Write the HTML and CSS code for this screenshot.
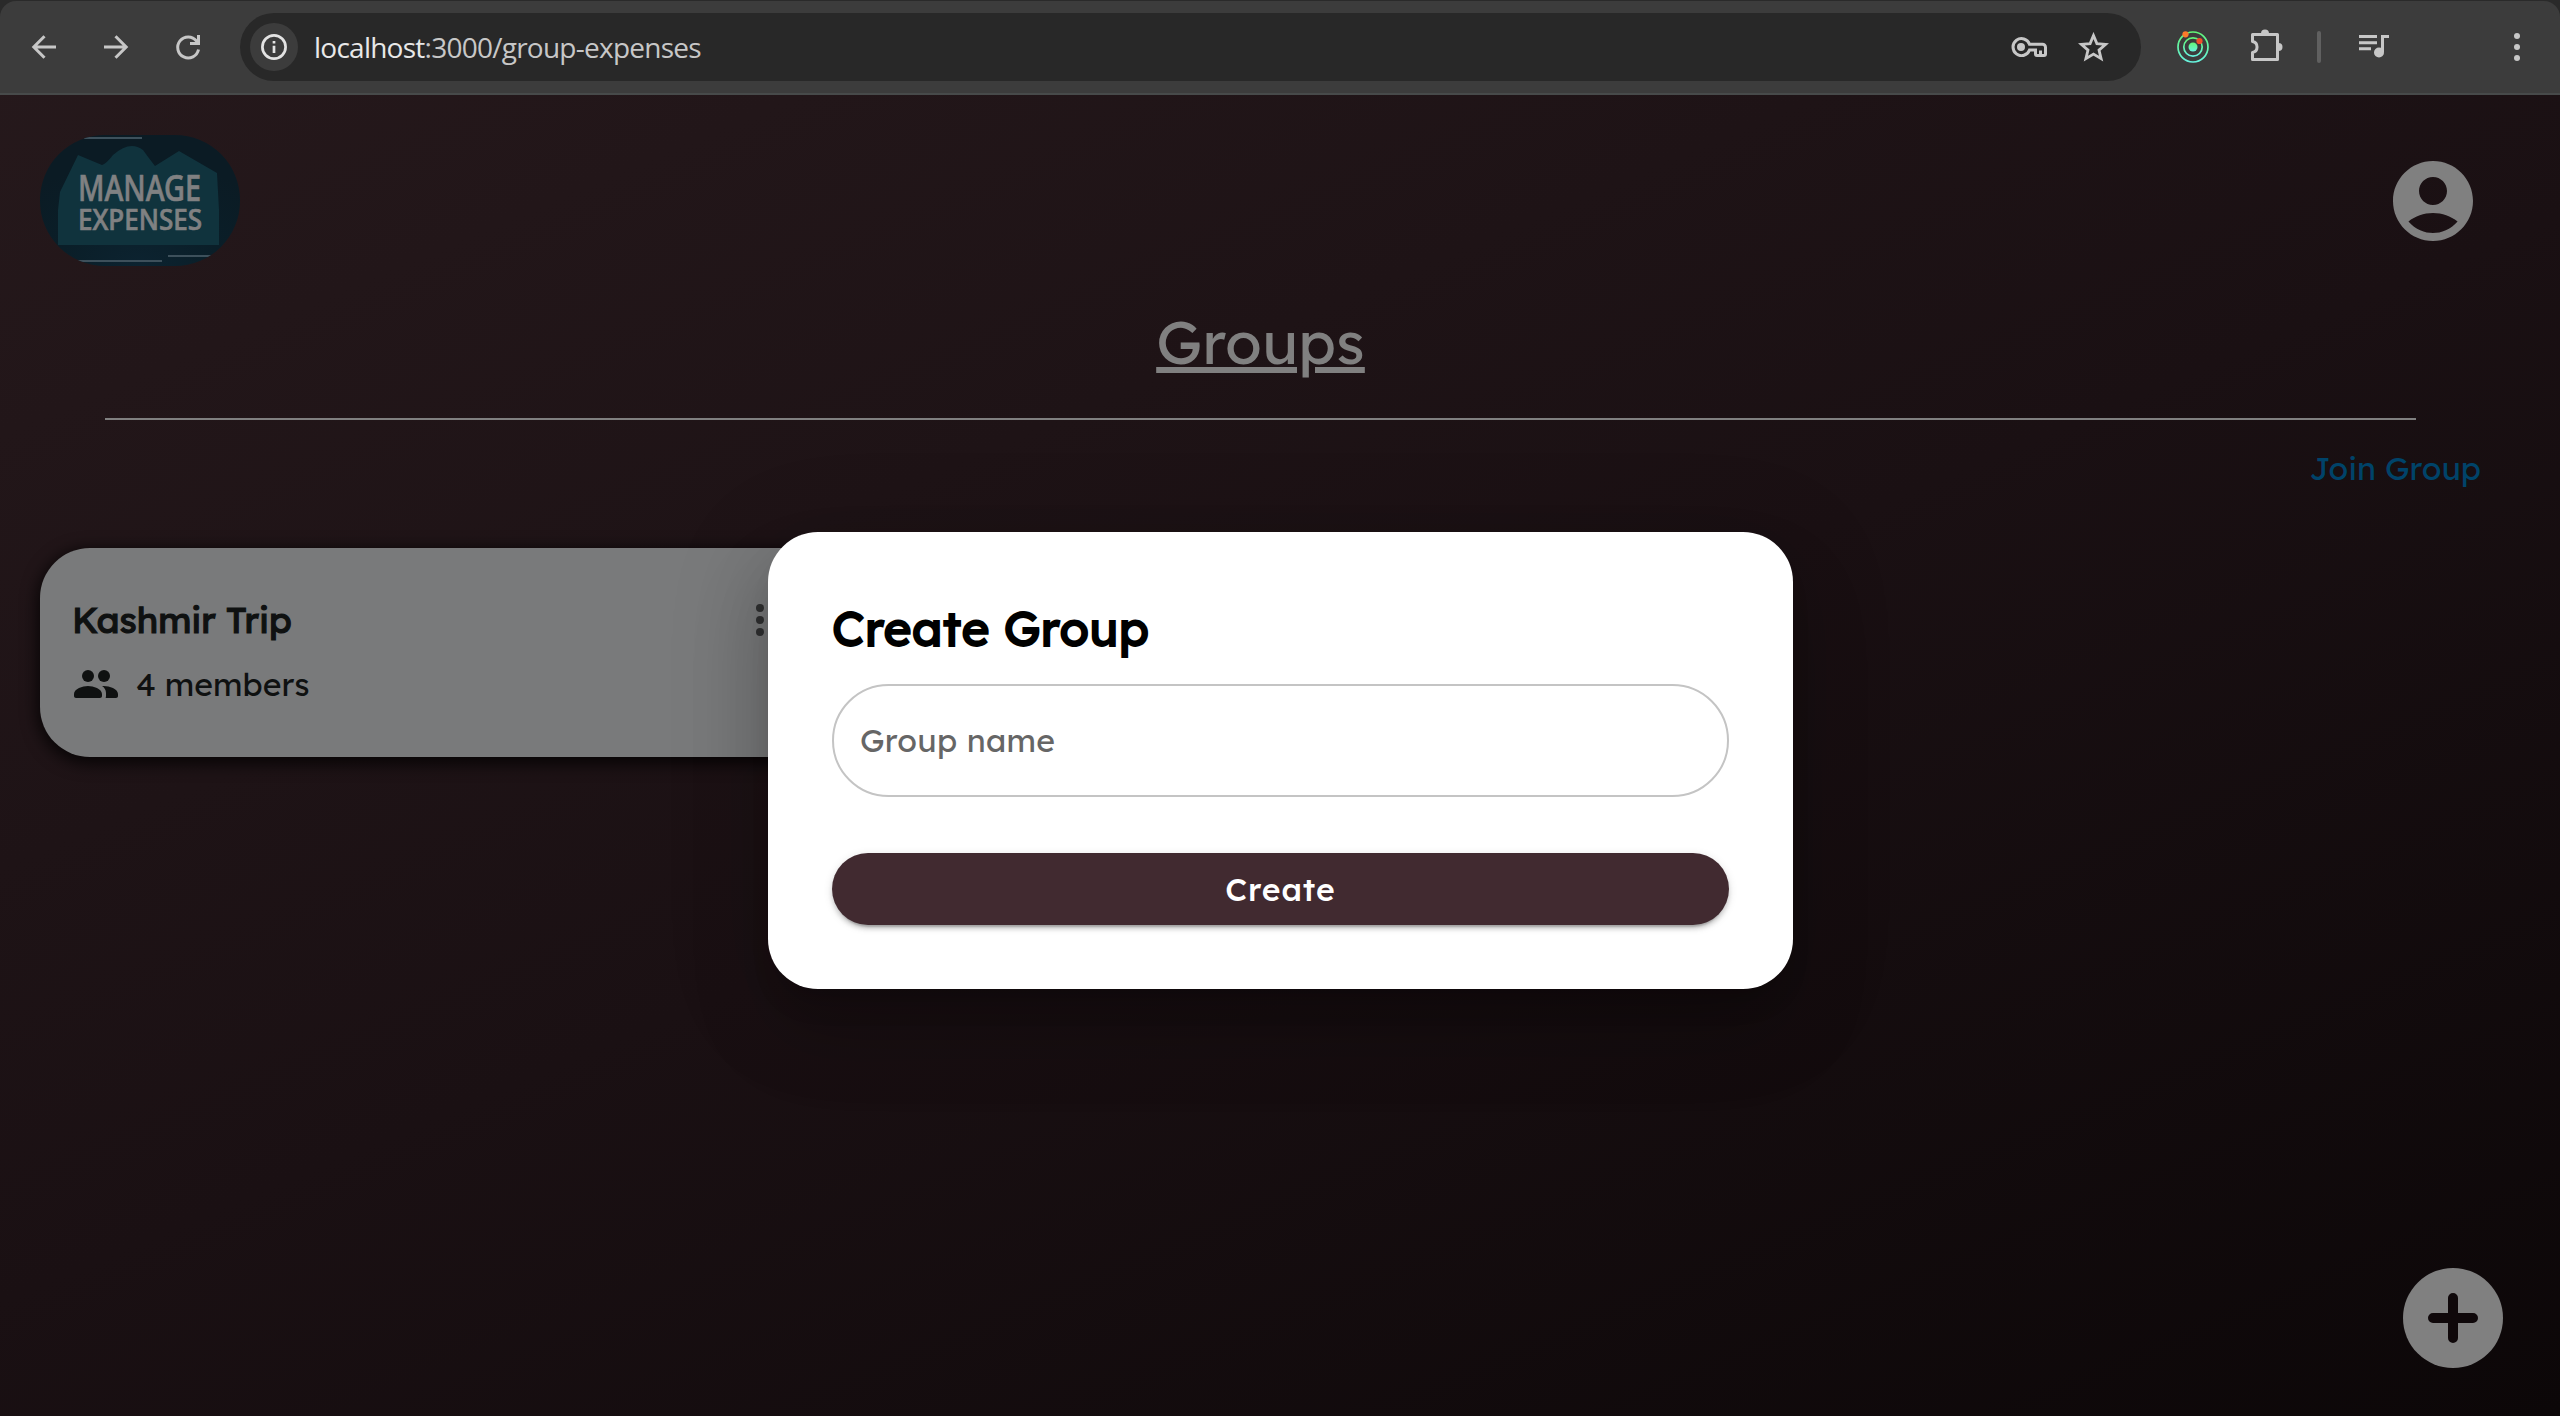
FILE: index.html
```html
<!DOCTYPE html>
<html lang="en">
<head>
<meta charset="utf-8">
<title>Manage Expenses</title>
<link rel="stylesheet" href="styles.css">
</head>
<body>
<header class="browser">
  <div class="toolbar">
    <svg class="nav-icon back" viewBox="0 0 24 24"><path d="M24 12H2M12.5 1.2 1.8 12l10.7 10.8"/></svg>
    <svg class="nav-icon forward" viewBox="0 0 24 24"><path d="M0 12h22M11.500 1.200 22.200 12 11.500 22.800"/></svg>
    <svg class="nav-icon reload" viewBox="0 0 24 24"><path d="M22.500 14.500A10.500 10.500 0 1 1 20.500 6L22.500 8.300M22.500 0v8.500H14"/></svg>
    <div class="omnibox">
      <span class="site-info"><svg viewBox="0 0 26 26"><circle cx="13" cy="13" r="11.600"/><path d="M13 11.800v7.200M13 7v2.600"/></svg></span>
      <span class="url"><b>localhost</b>:3000/group-expenses</span>
      <svg class="key" viewBox="0 0 36 20"><path d="M18.500 7.200H31.500a3 3 0 0 1 3 3V17a1.500 1.500 0 0 1-1.500 1.500H26a1.500 1.500 0 0 1-1.500-1.500V13H18.500A8.500 8.500 0 1 1 18.500 7.200Z"/><circle class="solid" cx="10" cy="10" r="4"/><path d="M29.500 18v-4.500"/></svg>
      <svg class="star" viewBox="0 0 31 30"><path d="M15.500 3.500 18.900 11.600 27.700 12.300 21 18.100 23.100 26.600 15.500 22.100 7.900 26.600 10 18.100 3.300 12.300 12.100 11.600Z"/></svg>
    </div>
    <svg class="radar" viewBox="0 0 32 32">
      <defs><linearGradient id="ring" x1="0" y1="0" x2="0" y2="1"><stop offset="0" stop-color="#62f776"/><stop offset="1" stop-color="#67f3df"/></linearGradient></defs>
      <g fill="none" stroke="url(#ring)" stroke-width="1.700"><circle cx="16" cy="16" r="15"/><circle cx="16" cy="16" r="9.200"/></g>
      <circle cx="16" cy="16" r="4.500" fill="url(#ring)"/><circle cx="8.500" cy="3.300" r="3.100" fill="#fb7a2b"/><circle cx="22.500" cy="10" r="3.100" fill="#f04e2b"/>
    </svg>
    <svg class="puzzle" viewBox="0 0 32 32"><path d="M1.500 5.500H26.500V30.500H1.500V23.500A5.600 5.600 0 0 0 1.500 12.500Z"/><path class="solid" d="M10 4.500a4 4 0 0 1 8 0ZM27.500 14a4 4 0 0 1 0 8Z"/></svg>
    <i class="divider"></i>
    <svg class="queue" viewBox="0 0 30 24"><path class="line" d="M0 1.500h18M0 7.700h18M0 13.700h12M30 1.500h-6.500V17"/><circle cx="20" cy="17.500" r="5"/></svg>
    <svg class="kebab" viewBox="0 0 6 28"><circle cx="3" cy="3" r="3"/><circle cx="3" cy="14" r="3"/><circle cx="3" cy="25" r="3"/></svg>
  </div>
</header>
<main class="page">
  <div class="topbar">
    <svg class="logo" viewBox="0 0 200 131">
      <defs>
        <clipPath id="pill"><rect width="200" height="131" rx="65"/></clipPath>
        <radialGradient id="sea" cx=".5" cy="1" r=".8"><stop offset="0" stop-color="#0c2330"/><stop offset=".5" stop-color="#0a1e28"/><stop offset="1" stop-color="#0b1b24"/></radialGradient>
      </defs>
      <g clip-path="url(#pill)">
        <rect width="200" height="131" fill="url(#sea)"/>
        <path fill="#10333d" d="M18 110V75L20 57 38 20 62 30Q66 29 73 20Q90 5 103 15Q108 22 115 31L139 16 177 38 179 75V110Z"/>
        <path fill="#3d505b" d="M44 2h58v2H44zM38 125h84v2H38zM128 120h44v2h-44z"/>
        <text class="logo-a" x="38" y="66" textLength="123" lengthAdjust="spacingAndGlyphs">MANAGE</text>
        <text class="logo-b" x="38" y="95" textLength="124" lengthAdjust="spacingAndGlyphs">EXPENSES</text>
      </g>
    </svg>
    <svg class="avatar" viewBox="0 0 24 24"><path d="M12 2C6.480 2 2 6.480 2 12s4.480 10 10 10 10-4.480 10-10S17.520 2 12 2zm0 4c1.930 0 3.500 1.570 3.500 3.500S13.930 13 12 13s-3.500-1.570-3.500-3.500S10.070 6 12 6zm0 14c-2.030 0-4.430-.820-6.140-2.880C7.550 15.800 9.680 15 12 15s4.450.800 6.140 2.120C16.430 19.180 14.030 20 12 20z"/></svg>
  </div>
  <h1 class="title">Groups</h1>
  <div class="actions"><a class="join">Join Group</a></div>
  <section class="card">
    <div class="card-head"><h2>Kashmir Trip</h2>
      <svg class="more" viewBox="0 0 8 32"><circle cx="4" cy="4" r="4"/><circle cx="4" cy="16" r="4"/><circle cx="4" cy="28" r="4"/></svg></div>
    <div class="members">
      <svg viewBox="1 5 22 14"><circle cx="8" cy="8" r="3"/><circle cx="16" cy="8" r="3"/><path d="M8 13c-2.670 0-7 1.340-7 4V18c0 .55.45 1 1 1h12c.55 0 1-.45 1-1v-1c0-2.660-4.330-4-7-4zM15.030 13.050c1.160.840 1.970 1.970 1.970 3.450V18c0 .35-.070.690-.180 1H22c.55 0 1-.45 1-1v-1c0-2.660-4.330-4-7-4-.290 0-.620.020-.970.050z"/></svg>
      <span>4 members</span>
    </div>
  </section>
</main>
<svg class="fab" viewBox="0 0 100 100"><circle cx="50" cy="50" r="50"/><path d="M50 30v40M30 50h40"/></svg>
<form class="dialog">
  <h2>Create Group</h2>
  <div class="field"><span>Group name</span></div>
  <button type="button" class="submit">Create</button>
</form>
</body>
</html>
```
FILE: styles.css
```css
* { box-sizing: border-box; }
body {
  margin: 0;
  width: 2560px;
  height: 1416px;
  overflow: hidden;
  position: relative;
  font-family: Lexend, Inter, "Open Sans", sans-serif;
  background: linear-gradient(157deg, #26191c, #1a1013 52%, #0c0708);
}
h1, h2 { margin: 0; }
svg { display: block; flex: none; }

.browser { height: 95px; background: #2a2a2a; padding-top: 1px; }
.toolbar {
  height: 94px;
  display: flex;
  align-items: center;
  padding: 0 40px 0 32px;
  background: #3c3c3c;
  border-bottom: 2px solid #474a4a;
  border-radius: 16px 16px 0 0;
}
.nav-icon { width: 24px; height: 24px; fill: none; stroke: #c7c7c7; stroke-width: 3; overflow: visible; }
.forward { margin-left: 48px; }
.reload { margin-left: 48px; }
.omnibox {
  width: 1901px;
  height: 68px;
  margin-left: 40px;
  padding: 0 32px 0 10px;
  display: flex;
  align-items: center;
  border-radius: 34px;
  background: #282828;
}
.site-info { width: 48px; height: 48px; border-radius: 50%; background: #3c3c3c; display: grid; place-items: center; }
.site-info svg { width: 26px; fill: none; stroke: #e3e3e3; stroke-width: 2.7; }
.url { margin-left: 16px; font: 28px "Open Sans", sans-serif; letter-spacing: -.75px; color: #c7c7c7; white-space: nowrap; }
.url b { font-weight: 400; color: #e8e8e8; }
.key { width: 36px; height: 20px; margin-left: auto; fill: none; stroke: #c7c7c7; stroke-width: 3; }
.key .solid { fill: #c7c7c7; stroke: none; }
.star { width: 31px; height: 30px; margin-left: 31px; margin-top: -1px; fill: none; stroke: #c7c7c7; stroke-width: 2.8; }
.radar { width: 32px; margin-left: 36px; overflow: visible; }
.puzzle { width: 32px; height: 32px; margin: -4px 0 0 42px; fill: none; stroke: #c7c7c7; stroke-width: 3; stroke-linejoin: round; }
.puzzle .solid { fill: #c7c7c7; stroke: none; }
.divider { width: 4px; height: 32px; margin-left: 34px; border-radius: 2px; background: #606060; }
.queue { width: 30px; height: 24px; margin: 0 0 0 38px; fill: #c7c7c7; }
.queue .line { fill: none; stroke: #c7c7c7; stroke-width: 3; }
.kebab { width: 6px; height: 28px; margin-left: auto; fill: #c7c7c7; }

.page { padding: 40px 79px 0 40px; }
.topbar { height: 131px; display: flex; justify-content: space-between; align-items: center; }
.logo { width: 200px; height: 131px; }
.logo text { font-family: "Noto Sans", "Open Sans", sans-serif; fill: #808182; stroke: #808182; stroke-width: .7px; font-weight: 500; }
.logo-a { font-size: 36px; }
.logo-b { font-size: 28px; }
.avatar { width: 96px; fill: #808080; }
.title {
  width: 2311px;
  height: 154px;
  margin-left: 65px;
  padding-top: 38px;
  border-bottom: 2px solid #808080;
  font-size: 60px;
  line-height: 76px;
  font-weight: 400;
  text-align: center;
  text-decoration: underline;
  text-decoration-thickness: 6px;
  text-underline-offset: 3px;
  color: #808080;
}
.actions { height: 128px; padding-top: 28px; display: flex; justify-content: flex-end; }
.join { font-size: 32px; line-height: 40px; color: #004369; }
.card {
  width: 800px;
  height: 209px;
  padding: 47px 56px 0 32px;
  border-radius: 50px;
  background: #797a7b;
  box-shadow: 0 4px 16px 3px rgba(0, 0, 0, .75);
  color: #0f1111;
}
.card-head { display: flex; align-items: center; height: 48px; }
.card h2 { width: 684px; font-size: 36px; font-weight: 400; -webkit-text-stroke: 1.2px currentColor; }
.more { width: 8px; height: 32px; margin-top: 2px; fill: #303132; }
.members { display: flex; align-items: center; gap: 18px; height: 40px; margin: 21px 0 0 2px; font-size: 32px; }
.members svg { width: 44px; height: 28px; fill: currentColor; }
.members span { margin-top: -1px; }
.fab { position: absolute; left: 2403px; top: 1268px; width: 100px; height: 100px; fill: #808080; stroke-linecap: round; }
.fab path { stroke: #0f080a; stroke-width: 10; }

.dialog {
  position: absolute;
  left: 768px;
  top: 532px;
  width: 1025px;
  height: 457px;
  padding: 64px 64px;
  border-radius: 50px;
  background: #fff;
  box-shadow: 0 22px 30px -14px rgba(0, 0, 0, .2), 0 48px 76px 6px rgba(0, 0, 0, .14), 0 18px 92px 16px rgba(0, 0, 0, .12);
}
.dialog h2 { font-size: 48px; line-height: 64px; font-weight: 400; letter-spacing: .36px; -webkit-text-stroke: 1.8px currentColor; color: #000; }
.field {
  height: 113px;
  margin-top: 24px;
  padding: 0 26px 2px;
  display: flex;
  align-items: center;
  border: 2px solid #c4c4c4;
  border-radius: 57px;
  font-size: 32px;
  letter-spacing: .3px;
  color: #666;
}
.submit {
  display: block;
  width: 100%;
  height: 72px;
  margin-top: 56px;
  border: 0;
  border-radius: 36px;
  background: #412a30;
  color: #fff;
  font: 500 32px Lexend, Inter, sans-serif;
  letter-spacing: .91px;
  box-shadow: 0 6px 2px -4px rgba(0, 0, 0, .2), 0 4px 4px rgba(0, 0, 0, .14), 0 2px 10px rgba(0, 0, 0, .12);
}
```
